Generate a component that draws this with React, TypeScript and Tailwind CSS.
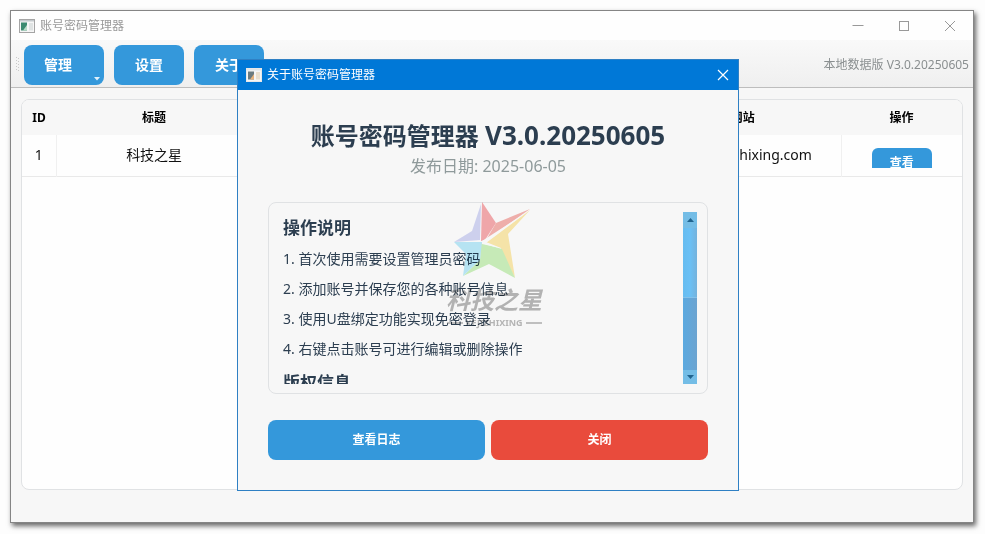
import React from "react";

const steps = [
  "1. 首次使用需要设置管理员密码",
  "2. 添加账号并保存您的各种账号信息",
  "3. 使用U盘绑定功能实现免密登录",
  "4. 右键点击账号可进行编辑或删除操作",
];

const toolButton = "h-10 rounded-lg bg-[#3498db] px-5 text-sm font-bold text-white";

function AppIcon({ dialog = false }: { dialog?: boolean }) {
  const from = dialog ? "#6b7b80" : "#3c8a70";
  const to = dialog ? "#e8b27a" : "#b9dcc8";
  return (
    <svg width="16" height="14" viewBox="0 0 16 14" className="shrink-0" aria-hidden="true">
      <rect x="0.5" y="0.5" width="15" height="13" fill="#f6f6f6" stroke={dialog ? "#e8e8e8" : "#a4a4a4"} />
      <rect x="1" y="1" width="14" height="1.5" fill={dialog ? "#dfe6ea" : "#c4c9cc"} />
      <rect x="2" y="3.5" width="6" height="8" fill={from} />
      <path d="M4 11.5 L8 6 V11.5Z" fill={to} />
      <rect x="10" y="4" width="4" height="7.5" fill={dialog ? "#eadfce" : "#dfe3e3"} />
    </svg>
  );
}

function TitleBar() {
  return (
    <header className="flex h-[29px] shrink-0 items-center bg-[#fefefe] pl-2 text-xs text-[#999]">
      <AppIcon />
      <h1 className="ml-[5px] flex-1">账号密码管理器</h1>
      <button aria-label="最小化" className="flex h-full w-[46px] items-center justify-center">
        <svg width="12" height="12" viewBox="0 0 12 12" stroke="#999"><path d="M0.5 5.5H11.5" /></svg>
      </button>
      <button aria-label="最大化" className="flex h-full w-[46px] items-center justify-center">
        <svg width="12" height="12" viewBox="0 0 12 12" fill="none" stroke="#999"><rect x="1.5" y="1.5" width="9" height="9" /></svg>
      </button>
      <button aria-label="关闭窗口" className="flex h-full w-[46px] items-center justify-center">
        <svg width="12" height="12" viewBox="0 0 12 12" stroke="#999"><path d="M1 1L11 11M11 1L1 11" /></svg>
      </button>
    </header>
  );
}

function Toolbar() {
  return (
    <nav className="flex h-12 shrink-0 items-center border-b border-[#bdbdbd] bg-gradient-to-b from-[#f9f9f9] to-[#efefef] pt-[3px] pr-1 pl-[5px]">
      <svg width="4" height="16" viewBox="0 0 4 16" className="mr-1 shrink-0" fill="#c9c9c9" aria-hidden="true">
        {[0, 3, 6, 9, 12].map((y) => (
          <g key={y}>
            <rect x="0" y={y} width="1" height="1" />
            <rect x="2" y={y + 1} width="1" height="1" />
          </g>
        ))}
      </svg>
      <div className="flex gap-[10px]">
        <button className={`${toolButton} relative w-20 text-left`}>
          管理
          <svg width="6" height="4" viewBox="0 0 6 4" className="absolute right-1 bottom-1" fill="#e2f1fb"><path d="M0 0H6L3 3.5Z" /></svg>
        </button>
        <button className={`${toolButton} w-[70px]`}>设置</button>
        <button className={`${toolButton} w-[70px]`}>关于</button>
      </div>
      <span className="ml-auto text-xs text-[#8a8f90]">本地数据版 V3.0.20250605</span>
    </nav>
  );
}

function AccountTable() {
  return (
    <main className="m-[10px] mt-[11px] mb-8 flex-1 overflow-hidden rounded-lg border border-[#e0e2e4] bg-[#fefefe]">
      <table className="w-full table-fixed border-collapse text-center text-sm text-[#111]">
        <colgroup>
          <col className="w-[34px]" />
          <col /><col /><col /><col />
          <col className="w-[121px]" />
        </colgroup>
        <thead>
          <tr className="h-[35px] bg-[#f7f7f7] text-xs font-bold text-black">
            <th>ID</th>
            <th>标题</th>
            <th></th>
            <th></th>
            <th>网站</th>
            <th>操作</th>
          </tr>
        </thead>
        <tbody>
          <tr className="h-[41px] border-b border-[#e9e9e9]">
            <td className="border-r border-[#f0f0f0]">1</td>
            <td className="border-r border-[#f0f0f0]">科技之星</td>
            <td className="border-r border-[#f0f0f0]"></td>
            <td className="border-r border-[#f0f0f0]"></td>
            <td className="border-r border-[#f0f0f0]">www.kejizhixing.com</td>
            <td className="p-0 pt-[5px]">
              <div className="mx-auto h-5 w-[60px] overflow-hidden">
                <button className="h-[30px] w-full rounded-md bg-[#3498db] text-xs font-bold text-white">查看</button>
              </div>
            </td>
          </tr>
        </tbody>
      </table>
    </main>
  );
}

function Watermark() {
  return (
    <div className="pointer-events-none absolute top-[142px] left-[204px] flex w-[104px] flex-col items-center mix-blend-multiply">
      <svg width="80" height="80" viewBox="0 0 80 80" className="mr-1 opacity-50" aria-hidden="true">
        <path d="M30 0L44 21L33 38L29 39Z" fill="#f05a60" />
        <path d="M44 21L78 7L34 38Z" fill="#ee6a62" />
        <path d="M78 8L56 32L63 76L50 52L49 46L34 40Z" fill="#fbd75e" />
        <path d="M29 41L50 47L63 76L37 62L11 74L28 58Z" fill="#9be67c" />
        <path d="M2 40H30L28 58L11 74L14 52Z" fill="#7bd7f5" />
        <path d="M29 2L28 38L2 40L20 29Z" fill="#a9b0ec" />
        <path d="M30 39L78 8L34 41L48 46L30 42Z" fill="#ffffff" />
      </svg>
      <div className="text-2xl leading-9 font-bold whitespace-nowrap text-[#9a9a9a]/70 italic">科技之星</div>
      <div className="flex items-center gap-[3px] text-[9px] leading-[10px] font-bold text-[#8c8c8c]/60">
        <span className="h-[2px] w-4 bg-[#8c8c8c]/50" />
        KEJIZHIXING
        <span className="h-[2px] w-4 bg-[#8c8c8c]/50" />
      </div>
    </div>
  );
}

function ScrollBar() {
  return (
    <div className="flex w-[14px] flex-col bg-gradient-to-r from-[#5aa9e0] to-[#6ba3d0]">
      <button aria-label="向上滚动" className="flex h-4 items-center justify-center bg-[#74bde6]">
        <svg width="7" height="4" viewBox="0 0 7 4" fill="#20648f"><path d="M3.5 0L7 4H0Z" /></svg>
      </button>
      <div className="h-[70px] border-b border-[#83c1ea] bg-gradient-to-r from-[#66bcf0] via-[#6ac0f5] to-[#74b2dc]" />
      <div className="flex-1" />
      <button aria-label="向下滚动" className="flex h-[14px] items-center justify-center bg-[#74bde6]">
        <svg width="7" height="4" viewBox="0 0 7 4" fill="#20648f"><path d="M0 0H7L3.5 4Z" /></svg>
      </button>
    </div>
  );
}

function AboutDialog() {
  return (
    <section role="dialog" aria-labelledby="about-title" className="absolute top-[59px] left-[237px] w-[502px] border border-[#2f80c4] bg-[#f7f7f7]">
      <header className="flex h-[30px] items-center bg-[#0078d7] pl-2 text-xs text-white">
        <AppIcon dialog />
        <h2 id="about-title" className="ml-[5px] flex-1">关于账号密码管理器</h2>
        <button aria-label="关闭对话框" className="flex h-full w-[30px] items-center justify-center">
          <svg width="12" height="12" viewBox="0 0 12 12" stroke="#fff" strokeWidth="1.2"><path d="M1 1L11 11M11 1L1 11" /></svg>
        </button>
      </header>
      <div className="px-[30px] pt-7 pb-[30px]">
        <p className="text-center text-2xl leading-[34px] font-bold text-[#2c3e50]">
          账号密码管理器 <span className="text-[26px]">V3.0.20250605</span>
        </p>
        <p className="text-center text-base leading-[26px] text-[#8f9a9b]">发布日期: 2025-06-05</p>
        <div className="mt-[23px] rounded-lg border border-[#e0e2e4] py-[9px] pr-[10px] pl-[14px]">
          <div className="flex h-[172px]">
            <div className="flex-1 overflow-hidden text-sm text-[#2c3e50]">
              <h3 className="text-[17px] leading-8 font-bold">操作说明</h3>
              {steps.map((s) => (
                <p key={s} className="leading-[30px]">{s}</p>
              ))}
              <h3 className="mt-[3px] text-[17px] leading-8 font-bold">版权信息</h3>
            </div>
            <ScrollBar />
          </div>
        </div>
        <div className="mt-[26px] flex gap-[6px] text-xs font-bold text-white">
          <button className="h-10 flex-1 rounded-lg bg-[#3498db]">查看日志</button>
          <button className="h-10 flex-1 rounded-lg bg-[#e94b3c]">关闭</button>
        </div>
      </div>
      <Watermark />
    </section>
  );
}

export default function App() {
  return (
    <div className="relative flex min-h-screen flex-col bg-[#fdfdfd] p-[10px] pr-[11px] pb-[11px] font-['Noto_Sans','Noto_Sans_CJK_SC',sans-serif]">
      <div className="flex flex-1 flex-col border border-[#858585] bg-[#f7f7f7] shadow-[2px_3px_5px_rgba(0,0,0,0.6)]">
        <TitleBar />
        <Toolbar />
        <AccountTable />
      </div>
      <AboutDialog />
    </div>
  );
}
